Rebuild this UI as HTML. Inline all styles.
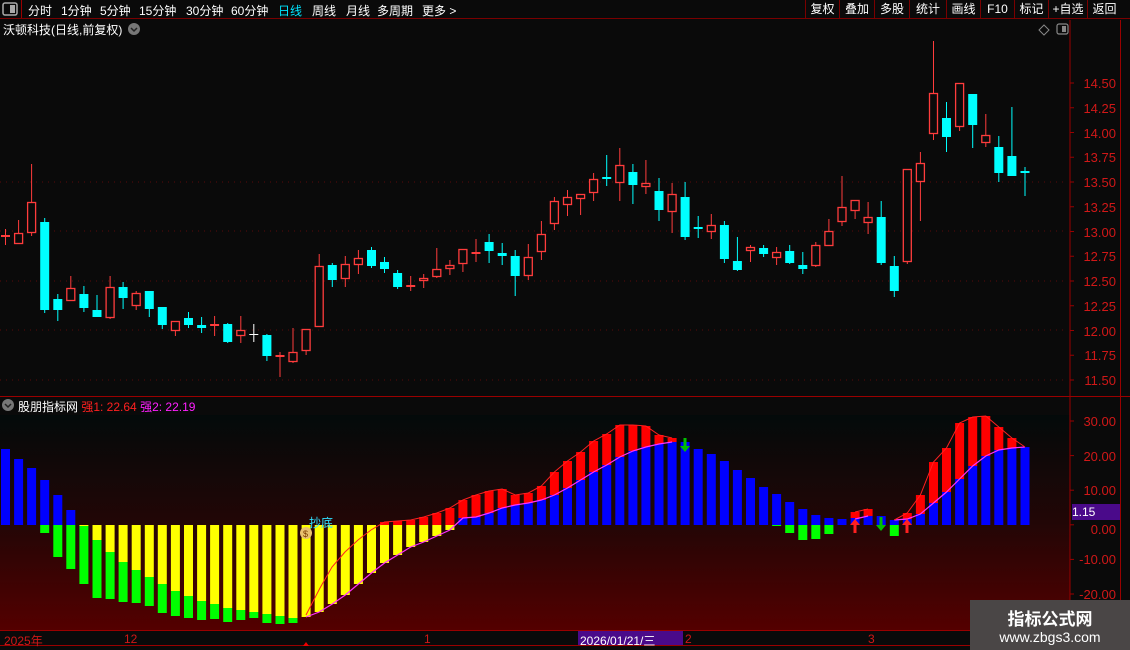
<!DOCTYPE html>
<html><head><meta charset="utf-8">
<style>
*{margin:0;padding:0;box-sizing:border-box}
body{width:1130px;height:650px;background:#0a0a0a;overflow:hidden;position:relative;font-family:"Liberation Sans","Noto Sans CJK SC",sans-serif;color:#fff}
.tb{position:absolute;left:0;top:0;width:1130px;height:19px;border-bottom:1px solid #7a0000;font-size:12px}
.tb span{position:absolute;top:2px;white-space:nowrap}
.rb{position:absolute;top:0;height:19px;border-left:1px solid #7a0000;font-size:12px;text-align:center;line-height:19px}
.ax{position:absolute;font-size:13px;color:#d01818;right:14px;line-height:13px}
</style></head><body>
<svg id="s" width="1130" height="650" style="position:absolute;left:0;top:0">
<defs><linearGradient id="g" x1="0" y1="0" x2="0" y2="1"><stop offset="0" stop-color="#030a0a"/><stop offset="0.5" stop-color="#220606"/><stop offset="1" stop-color="#540000"/></linearGradient></defs>
<rect x="0" y="415" width="1070" height="215" fill="url(#g)"/>
<rect x="0" y="397" width="1070" height="18" fill="#0a0a0a"/>
<g id="grid"></g><g id="cd"></g><g id="ind"></g>
<line x1="1070" y1="20" x2="1070" y2="646" stroke="#9a0000"/>
<line x1="1120.5" y1="20" x2="1120.5" y2="646" stroke="#9a0000"/>
<line x1="0" y1="396.5" x2="1130" y2="396.5" stroke="#9a0000"/>
<line x1="0" y1="630.5" x2="1130" y2="630.5" stroke="#9a0000"/>
<line x1="0" y1="645.5" x2="1130" y2="645.5" stroke="#9a0000"/>
<rect x="1072" y="504" width="48" height="16" fill="#4a0a8a"/>
<rect x="578" y="631" width="105" height="14" fill="#4a0a8a"/>
<rect x="3" y="3" width="14" height="12" rx="2" fill="none" stroke="#aaa" stroke-width="1.5"/><rect x="10" y="5" width="5" height="8" fill="#aaa"/>
<line x1="21.5" y1="0" x2="21.5" y2="19" stroke="#9a0000"/>
<rect x="1057" y="24" width="11" height="10" rx="2" fill="none" stroke="#888" stroke-width="1.2"/><rect x="1062" y="26" width="4" height="6" fill="#888"/>
<path d="M1044 25 L1049 30 L1044 35 L1039 30Z" fill="none" stroke="#888"/>
<circle cx="134" cy="29" r="6" fill="#777"/><path d="M131 28 L134 31 L137 28" stroke="#222" stroke-width="1.5" fill="none"/>
<circle cx="8" cy="405" r="6" fill="#777"/><path d="M5 404 L8 407 L11 404" stroke="#222" stroke-width="1.5" fill="none"/>
<circle cx="306" cy="533" r="6" fill="#e8c070"/><text x="303" y="537" font-size="9" fill="#7a3a00" font-family="Liberation Sans">$</text>
<polygon points="306,642 303,646 309,646" fill="#e00"/>
</svg>
<div class="tb">
<span style="left:28px">分时</span><span style="left:61px">1分钟</span><span style="left:100px">5分钟</span><span style="left:139px">15分钟</span><span style="left:186px">30分钟</span><span style="left:231px">60分钟</span><span style="left:278px;color:#00e5ff">日线</span><span style="left:312px">周线</span><span style="left:346px">月线</span><span style="left:377px">多周期</span><span style="left:422px">更多 &gt;</span>
</div>
<div class="rb" style="left:805px;width:34px">复权</div><div class="rb" style="left:839px;width:35px">叠加</div><div class="rb" style="left:874px;width:35px">多股</div><div class="rb" style="left:909px;width:37px">统计</div><div class="rb" style="left:946px;width:34px">画线</div><div class="rb" style="left:980px;width:34px">F10</div><div class="rb" style="left:1014px;width:34px">标记</div><div class="rb" style="left:1048px;width:39px">+自选</div><div class="rb" style="left:1087px;width:34px">返回</div>
<div style="position:absolute;left:3px;top:21px;font-size:12px">沃顿科技(日线,前复权)</div>
<div style="position:absolute;left:18px;top:398px;font-size:12px">股朋指标网 <span style="color:#ff2020">强1: 22.64</span> <span style="color:#ff20ff">强2: 22.19</span></div>
<div style="position:absolute;left:309px;top:514px;font-size:12px;color:#30e0ff">抄底</div>
<div style="position:absolute;left:1072px;top:505px;font-size:12px;color:#fff">1.15</div>
<div style="position:absolute;left:0;top:632px;font-size:12px;color:#d01818;width:1130px;height:13px">
<span style="position:absolute;left:4px">2025年</span><span style="position:absolute;left:124px">12</span><span style="position:absolute;left:424px">1</span><span style="position:absolute;left:580px;color:#fff">2026/01/21/三</span><span style="position:absolute;left:685px">2</span><span style="position:absolute;left:868px">3</span></div>
<div id="ax"></div>
<div style="position:absolute;left:970px;top:600px;width:160px;height:50px;background:#4a4646;text-align:center">
<div style="font-size:17px;font-weight:bold;margin-top:5px;font-family:'Noto Sans CJK SC',sans-serif">指标公式网</div>
<div style="font-size:14px;margin-top:-1px">www.zbgs3.com</div></div>
<script>
var C=[['r',235,237,229,245],['r',233,244,220,244],['r',202,233,164,236],['c',222,310,218,313],['c',299,310,294,321],['r',288,301,276,301],['c',294,308,286,312],['c',310,317,295,317],['r',287,318,276,319],['c',287,298,282,309],['r',293,306,291,310],['c',291,309,291,317],['c',307,325,307,329],['r',321,331,321,336],['c',318,325,312,328],['c',325,328,317,333],['r',324,326,316,336],['c',324,342,323,343],['r',330,336,316,343],['w',334,335,324,342],['c',335,356,334,361],['r',355,357,352,377],['r',352,362,328,363],['r',329,351,329,355],['r',266,327,254,327],['c',265,280,263,287],['r',264,279,256,287],['r',258,265,250,274],['c',250,266,247,268],['c',262,269,257,273],['c',273,287,270,289],['r',285,287,276,291],['r',278,281,274,288],['r',269,277,248,278],['r',265,269,260,275],['r',249,264,249,272],['r',252,254,239,262],['c',242,251,234,263],['c',253,256,243,265],['c',256,276,250,296],['r',257,276,244,280],['r',234,252,221,260],['r',201,224,197,230],['r',197,205,190,216],['r',194,199,194,215],['r',179,193,173,201],['c',177,179,155,186],['r',165,183,148,201],['c',172,185,164,204],['r',183,187,160,194],['c',191,210,178,221],['r',194,212,183,233],['c',197,237,182,240],['c',227,229,216,238],['r',225,232,214,239],['c',225,259,221,263],['c',261,270,237,271],['r',247,251,245,262],['c',248,254,245,257],['r',252,258,247,265],['c',251,263,245,264],['c',265,269,252,274],['r',245,266,242,267],['r',231,246,219,246],['r',207,222,176,226],['r',200,211,200,219],['r',217,223,202,234],['c',217,263,201,265],['c',266,291,256,297],['r',169,262,169,264],['r',163,182,152,221],['r',93,134,41,140],['c',118,137,102,152],['r',83,127,83,131],['c',94,125,94,148],['r',135,143,114,147],['c',147,173,136,182],['c',156,176,107,176],['c',171,173,167,196]];
var B=[[['b',449,525]],[['b',459,525]],[['b',468,525]],[['b',480,525],['g',525,533]],[['b',495,525],['g',525,557]],[['b',510,525],['g',525,569]],[['y',525,526],['g',526,584]],
[['y',525,540],['g',540,598]],[['y',525,552],['g',552,599]],[['y',525,562],['g',562,602]],[['y',525,570],['g',570,603]],[['y',525,577],['g',577,606]],[['y',525,584],['g',584,613]],[['y',525,591],['g',591,616]],[['y',525,596],['g',596,618]],[['y',525,601],['g',601,620]],[['y',525,604],['g',604,619]],[['y',525,608],['g',608,622]],[['y',525,610],['g',610,620]],[['y',525,612],['g',612,618]],[['y',525,614],['g',614,623]],[['y',525,616],['g',616,624]],[['y',525,618],['g',618,623]],
[['y',525,617]],[['y',525,612]],[['y',525,604]],[['y',525,595]],[['y',525,584]],[['y',525,573]],[['r',522,525],['y',525,563]],[['r',521,525],['y',525,555]],[['r',520,525],['y',525,547]],[['r',517,525],['y',525,542]],[['r',513,525],['y',525,536]],[['r',508,525],['y',525,530]],
[['r',500,518],['b',518,525]],[['r',495,517],['b',517,525]],[['r',491,513],['b',513,525]],[['r',489,508],['b',508,525]],[['r',495,505],['b',505,525]],[['r',493,503],['b',503,525]],[['r',486,500],['b',500,525]],[['r',472,495],['b',495,525]],[['r',461,488],['b',488,525]],[['r',452,480],['b',480,525]],[['r',441,472],['b',472,525]],[['r',434,465],['b',465,525]],[['r',425,457],['b',457,525]],[['r',425,451],['b',451,525]],[['r',426,447],['b',447,525]],[['r',435,444],['b',444,525]],[['r',438,442],['b',442,525]],
[['b',442,525]],[['b',449,525]],[['b',454,525]],[['b',461,525]],[['b',470,525]],[['b',478,525]],[['b',487,525]],[['b',494,525],['g',525,526]],[['b',502,525],['g',525,533]],[['b',509,525],['g',525,540]],[['b',515,525],['g',525,539]],[['b',518,525],['g',525,534]],[['b',519,525]],[['r',512,518],['b',518,525]],[['r',509,516],['b',516,525]],[['b',516,525]],[['b',520,525],['g',525,536]],[['r',513,519],['b',519,525]],[['r',495,514],['b',514,525]],[['r',462,503],['b',503,525]],[['r',448,492],['b',492,525]],[['r',423,479],['b',479,525]],[['r',417,466],['b',466,525]],[['r',416,456],['b',456,525]],[['r',427,450],['b',450,525]],[['r',438,448],['b',448,525]],[['b',447,525]]];
var col={b:'#0000ff',g:'#00ff00',y:'#ffff00',r:'#ff0000'};
var cs='',is='',gs='',ax='';
function cx(i){return 5.5+13.07*i}
C.forEach(function(d,i){var x=cx(i),c=d[0]=='r'?'#ff3c3c':d[0]=='c'?'#00ffff':'#ffffff';
cs+='<line x1="'+x.toFixed(1)+'" y1="'+d[3]+'" x2="'+x.toFixed(1)+'" y2="'+d[4]+'" stroke="'+c+'"/>';
var h=Math.max(1,d[2]-d[1]);
if(d[0]=='r'&&h>2)cs+='<rect x="'+(x-4).toFixed(1)+'" y="'+(d[1]+.5)+'" width="8" height="'+(h-1)+'" fill="#0a0a0a" stroke="'+c+'" stroke-width="1.3"/>';
else cs+='<rect x="'+(x-4.5).toFixed(1)+'" y="'+d[1]+'" width="9" height="'+h+'" fill="'+c+'"/>';});
var mag=[],red=[];
B.forEach(function(s,i){var l=1+13.07*i;s.forEach(function(g){is+='<rect x="'+l.toFixed(1)+'" y="'+g[1]+'" width="9" height="'+Math.max(1,g[2]-g[1])+'" fill="'+col[g[0]]+'"/>';});
var x=(l+4.5).toFixed(1);
if(i>=23&&i<=34){var yb=s[s.length-1][2];mag.push(x+','+yb);}
else if(i>34&&i<=78){var bt=s.filter(function(g){return g[0]=='b'})[0];if(bt&&(i<52||i>=68))mag.push(x+','+bt[1]);}
if(i>=29&&i<=51||i>=68&&i<=78){red.push(x+','+s[0][1]);}});
var rl=['306,615','320,588','332,567','345,552','358,540','371,530'].concat(red.slice(0,23));
is+='<polyline points="'+mag.slice(0,29).join(' ')+'" fill="none" stroke="#ff30ff" stroke-width="1.2"/>';
is+='<polyline points="'+mag.slice(29).join(' ')+'" fill="none" stroke="#ff30ff" stroke-width="1.2"/>';
is+='<polyline points="'+cx(65).toFixed(1)+',519 '+cx(66).toFixed(1)+',516" fill="none" stroke="#ff30ff" stroke-width="1.2"/>';
is+='<polyline points="'+rl.join(' ')+'" fill="none" stroke="#ff2020" stroke-width="1"/>';
is+='<polyline points="'+red.slice(23).join(' ')+'" fill="none" stroke="#ff2020" stroke-width="1"/>';
is+='<polyline points="'+cx(65).toFixed(1)+',512 '+cx(66).toFixed(1)+',509" fill="none" stroke="#ff2020"/>';
function arr(x,y,up,c){return up?'<path d="M'+x+' '+y+' l-5 6 h3.5 v8 h3 v-8 h3.5z" fill="'+c+'"/>':'<path d="M'+x+' '+y+' l-5 -6 h3.5 v-8 h3 v8 h3.5z" fill="'+c+'"/>';}
is+=arr(855,519,1,'#ff2020')+arr(907,519,1,'#ff2020')+arr(685,452,0,'#00c000')+arr(881,531,0,'#00c000');
[182,231,281,330,380].forEach(function(y){gs+='<line x1="0" y1="'+y+'" x2="1068" y2="'+y+'" stroke="#5a0a0a" stroke-dasharray="1,5"/>';});
var pl=['14.50','14.25','14.00','13.75','13.50','13.25','13.00','12.75','12.50','12.25','12.00','11.75','11.50'];
pl.forEach(function(t,k){var y=83+24.75*k;gs+='<line x1="1070" y1="'+y+'" x2="1074" y2="'+y+'" stroke="#9a0000"/>';ax+='<div class="ax" style="top:'+(y-6)+'px">'+t+'</div>';});
['30.00','20.00','10.00','0.00','-10.00','-20.00'].forEach(function(t,k){var y=421+34.6*k;gs+='<line x1="1070" y1="'+y+'" x2="1074" y2="'+y+'" stroke="#9a0000"/>';if(k!=3)ax+='<div class="ax" style="top:'+(y-6)+'px">'+t+'</div>';else ax+='<div class="ax" style="top:'+(y-2)+'px">'+t+'</div>';});
document.getElementById('cd').innerHTML=cs;document.getElementById('ind').innerHTML=is;document.getElementById('grid').innerHTML=gs;document.getElementById('ax').innerHTML=ax;
</script>
</body></html>
